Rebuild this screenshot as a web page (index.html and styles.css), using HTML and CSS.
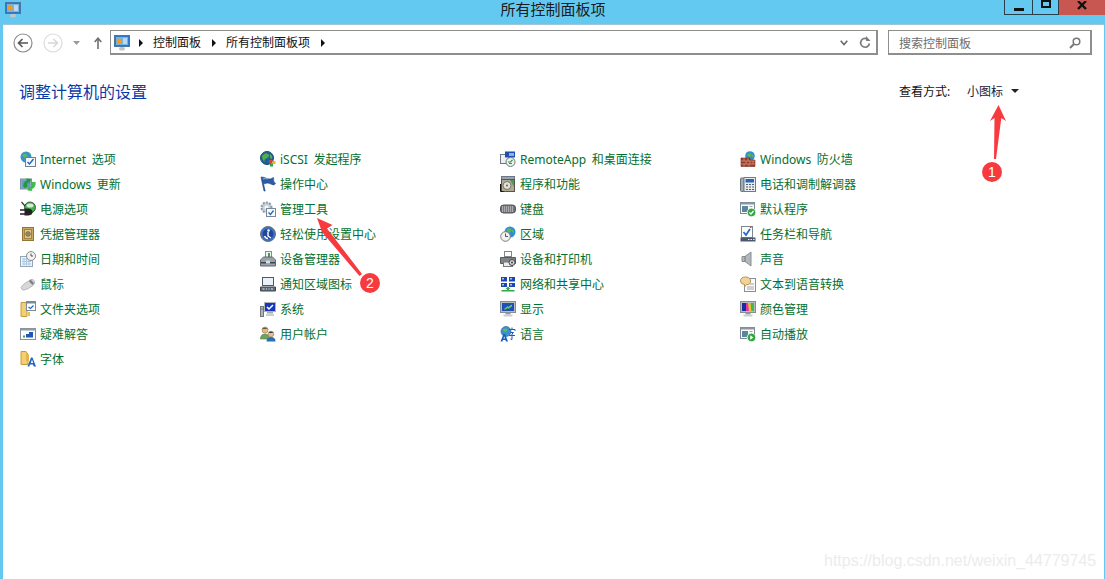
FILE: index.html
```html
<!DOCTYPE html>
<html lang="zh-CN">
<head>
<meta charset="utf-8">
<title>所有控制面板项</title>
<link rel="stylesheet" href="styles.css">
</head>
<body>
<div class="window">
  <header class="titlebar">
    <div class="title-left">
      <svg class="ico" viewBox="0 0 16 16"><rect x="0.5" y="0.5" width="15" height="11" fill="#2f78c4" stroke="#4a78a4"/><rect x="2" y="2" width="12" height="8" fill="#74b4e6"/><circle cx="5.200" cy="6" r="2.600" fill="#f29a1e"/><path d="M9 4h4M9 6h4M9 8h4" stroke="#fff"/><rect x="5" y="12" width="6" height="3.500" rx="1.700" fill="#c4c4c4"/></svg>
    </div>
    <div class="title-text">所有控制面板项</div>
    <div class="caption">
      <div class="cap cap-min"><span class="min-glyph"></span></div>
      <div class="cap cap-max"><span class="max-glyph"></span></div>
      <div class="cap cap-close"><svg width="10" height="9" viewBox="0 0 10 9"><path d="M1 0l8 8M9 0l-8 8" stroke="#111" stroke-width="2.400" fill="none"/></svg></div>
    </div>
  </header>

  <main class="client">
    <nav class="navbar">
      <div class="nav-buttons">
        <svg class="nav-round" viewBox="0 0 20 20"><circle cx="10" cy="10" r="9" fill="#fff" stroke="#8c8c8c" stroke-width="1.200"/><path d="M15 10H6M9.500 6L5.500 10l4 4" fill="none" stroke="#555" stroke-width="1.600"/></svg>
        <svg class="nav-round nav-fwd" viewBox="0 0 20 20"><circle cx="10" cy="10" r="9" fill="#fff" stroke="#dcdcdc" stroke-width="1.200"/><path d="M5 10h9M10.500 6l4 4-4 4" fill="none" stroke="#d8d8d8" stroke-width="1.600"/></svg>
        <svg class="nav-drop" width="7" height="4" viewBox="0 0 7 4"><path d="M0 0h7L3.500 4z" fill="#9a9a9a"/></svg>
        <svg class="nav-up" width="8" height="12" viewBox="0 0 8 12"><path d="M4 12V2M0.700 5L4 1.200 7.300 5" fill="none" stroke="#707070" stroke-width="1.600"/></svg>
      </div>
      <div class="address">
        <svg class="ico" viewBox="0 0 16 16"><rect x="0.5" y="0.5" width="15" height="11" fill="#2f78c4" stroke="#4a78a4"/><rect x="2" y="2" width="12" height="8" fill="#74b4e6"/><circle cx="5.200" cy="6" r="2.600" fill="#f29a1e"/><path d="M9 4h4M9 6h4M9 8h4" stroke="#fff"/><rect x="5" y="12" width="6" height="3.500" rx="1.700" fill="#c4c4c4"/></svg>
        <span class="crumb-sep first"></span>
        <span class="crumb">控制面板</span>
        <span class="crumb-sep"></span>
        <span class="crumb">所有控制面板项</span>
        <span class="crumb-sep"></span>
        <span class="address-fill"></span>
        <svg class="addr-chev" width="8" height="6" viewBox="0 0 8 6"><path d="M0.700 0.700L4 4.500 7.300 0.700" fill="none" stroke="#666" stroke-width="1.500"/></svg>
        <svg class="addr-refresh" width="12" height="13" viewBox="0 0 12 13"><path d="M9.600 4.200A4.400 4.400 0 1 0 10.400 7.500" fill="none" stroke="#7d7d7d" stroke-width="1.700"/><path d="M7 0v5h4.500z" fill="#7d7d7d"/></svg>
      </div>
      <div class="search">
        <span class="search-text">搜索控制面板</span>
        <svg width="12" height="12" viewBox="0 0 12 12"><circle cx="7.500" cy="4.500" r="3.300" fill="none" stroke="#777" stroke-width="1.500"/><path d="M5 7l-4 4" stroke="#777" stroke-width="2"/></svg>
      </div>
    </nav>

    <section class="heading-row">
      <h1 class="heading">调整计算机的设置</h1>
      <div class="view-by">
        <span class="view-label">查看方式:</span>
        <span class="view-value">小图标</span>
        <span class="view-caret"></span>
      </div>
    </section>

    <section class="items">
      <div class="col">
        <a class="item"><svg class="ico" viewBox="0 0 16 16"><circle cx="6" cy="6" r="5.500" fill="#3d8fd0"/><path d="M2 4q3-3 5 0t-2 4zM8 1q3 1 3 4" fill="#5cb85a"/><rect x="5.500" y="6.500" width="10" height="9" fill="#f4f7fb" stroke="#6f7f90"/><path d="M7.500 11l2 2 4-5" fill="none" stroke="#2568c0" stroke-width="1.500"/></svg><span>Internet 选项</span></a>
        <a class="item"><svg class="ico" viewBox="0 0 16 16"><rect x="0.500" y="3" width="11" height="10" fill="#8faac0" stroke="#7a8fa2"/><rect x="2" y="4.500" width="8" height="7" fill="#5f9ac8"/><path d="M4 12q-2-5 3-8l-1-1.500 5 .5-1.500 4.500L8.500 6Q6 8 7.500 11z" fill="#1f9a35"/><path d="M15.500 6q1 5-4 7.500l1 1.500-5-.5 1.500-4.500 1 1.500q2.500-2 2-5.500z" fill="#3fbb4a"/></svg><span>Windows 更新</span></a>
        <a class="item"><svg class="ico" viewBox="0 0 16 16"><circle cx="10" cy="6.500" r="5.500" fill="#45b04e" stroke="#2d3a2d" stroke-width=".8"/><ellipse cx="10" cy="4.500" rx="3.500" ry="2" fill="#cdf0cf"/><path d="M0 9h5M0 13h5" stroke="#222" stroke-width="1.500"/><path d="M4.500 7.500h4q4 .5 4 3.500t-4 3.500h-4z" fill="#232323"/><path d="M1.500 1l3.500 4" stroke="#333" stroke-width="1.200"/></svg><span>电源选项</span></a>
        <a class="item"><svg class="ico" viewBox="0 0 16 16"><rect x="2.500" y="1.500" width="11" height="13" fill="#c9a75c" stroke="#957438"/><rect x="4.500" y="3.500" width="7" height="9" fill="#ddc688" stroke="#a3843f"/><circle cx="8" cy="8" r="2.200" fill="#b9b09a" stroke="#6c5a30"/><circle cx="8" cy="8" r="0.800" fill="#5a4a20"/></svg><span>凭据管理器</span></a>
        <a class="item"><svg class="ico" viewBox="0 0 16 16"><rect x="0.500" y="5.500" width="12" height="10" fill="#eef4fb" stroke="#93a6b8"/><path d="M2 8h9M2 10.500h9M2 13h9M4 7v7.500M6.500 7v7.500M9 7v7.500" stroke="#a9c7e4"/><circle cx="11" cy="5" r="4.500" fill="#f2f2f2" stroke="#8a8a8a"/><path d="M11 2.500V5h2" fill="none" stroke="#555"/></svg><span>日期和时间</span></a>
        <a class="item"><svg class="ico" viewBox="0 0 16 16"><path d="M1 11.500Q3 8 7 6l4-2.500q3-.5 3.500 2t-1.500 4L9 12q-5 3-7 1.500z" fill="#d6d8da" stroke="#a6a9ad" stroke-width=".8"/><path d="M10.500 3.500l3.500 3.500-1.500 2-3.500-3.500z" fill="#7c8085"/></svg><span>鼠标</span></a>
        <a class="item"><svg class="ico" viewBox="0 0 16 16"><path d="M1 1.500h5l1 2v12H1z" fill="#f2cf72" stroke="#c49c3c"/><rect x="6.500" y="0.500" width="9" height="9" fill="#fdfdfd" stroke="#7d8a98"/><rect x="6.500" y="0.500" width="9" height="2" fill="#7d8a98"/><path d="M8.500 6l2 1.500 3-3" fill="none" stroke="#2568c0" stroke-width="1.300"/><rect x="8" y="11" width="2" height="4" fill="#e9bf56"/></svg><span>文件夹选项</span></a>
        <a class="item"><svg class="ico" viewBox="0 0 16 16"><rect x="0.500" y="2.500" width="15" height="11" fill="#fdfdfd" stroke="#84909c"/><rect x="0.500" y="2.500" width="15" height="2" fill="#8d99a5"/><path d="M6 11V8h3V6h4v5.500H6z" fill="#2056b8"/><rect x="3" y="9.500" width="2" height="2" fill="#45a04c"/></svg><span>疑难解答</span></a>
        <a class="item"><svg class="ico" viewBox="0 0 16 16"><path d="M1 0.500h5l2 3v10H1z" fill="#f2cf72" stroke="#c49c3c"/><path d="M6 2l3 2v6H6z" fill="#e2b44c"/><path d="M7.500 15.500L11 6.500h1.500l3.500 9h-2.300l-.7-2h-3l-.7 2zM10.800 12h2.400L12 8.500z" fill="#1f63c9"/></svg><span>字体</span></a>
      </div>
      <div class="col">
        <a class="item"><svg class="ico" viewBox="0 0 16 16"><circle cx="7" cy="7" r="6.500" fill="#215f9a" stroke="#194a78"/><path d="M2 5q3-4 6-2t-1 4-2 4q-3-2-3-6zM10 3q3 2 2 5l-2-1z" fill="#4fae4a"/><rect x="9" y="9" width="3.500" height="3.500" fill="#e23b30"/><rect x="12.500" y="10" width="3" height="3" fill="#f2b51f"/><rect x="10" y="12.500" width="3" height="3" fill="#2fa34a"/></svg><span>iSCSI 发起程序</span></a>
        <a class="item"><svg class="ico" viewBox="0 0 16 16"><path d="M1 1l3 14h1.200L3.500 8Q8 6 11 8t4.500-.500Q13 6 13.500 1.500 10 4 7 2.500T1 1z" fill="#2a5ca8" stroke="#1c3f78" stroke-width=".6"/><path d="M3 3q3-1 5 0" stroke="#8fb5e6" fill="none"/></svg><span>操作中心</span></a>
        <a class="item"><svg class="ico" viewBox="0 0 16 16"><circle cx="6.500" cy="6.500" r="5" fill="#c4d2dc" stroke="#8c9ba8" stroke-width="2" stroke-dasharray="2 1.200"/><circle cx="6.500" cy="6.500" r="2" fill="#f4f7f9"/><rect x="6.500" y="7.500" width="9" height="8" fill="#f7f9fb" stroke="#7a8894"/><path d="M8.500 11.500l2 2 3-4" fill="none" stroke="#2568c0" stroke-width="1.300"/></svg><span>管理工具</span></a>
        <a class="item"><svg class="ico" viewBox="0 0 16 16"><circle cx="8" cy="8" r="7.500" fill="#3d6fc4" stroke="#69737d"/><circle cx="8" cy="8" r="5.300" fill="#21479a"/><circle cx="8.500" cy="4.500" r="1.300" fill="#fff"/><path d="M8 6v4l3 2M4.500 10q1 2.500 3.500 2.500" fill="none" stroke="#fff" stroke-width="1.400"/></svg><span>轻松使用设置中心</span></a>
        <a class="item"><svg class="ico" viewBox="0 0 16 16"><rect x="5.500" y="0.500" width="6" height="7" fill="#eef0f2" stroke="#8c8c8c"/><rect x="8" y="2" width="2" height="4" fill="#3da548"/><path d="M0.500 9l3-3h9l3 3v6h-15z" fill="#9aa3ac" stroke="#5f6870"/><rect x="1" y="11" width="14" height="1.500" fill="#3f474f"/><rect x="6" y="9.500" width="4" height="3" fill="#d8dde2"/></svg><span>设备管理器</span></a>
        <a class="item"><svg class="ico" viewBox="0 0 16 16"><rect x="2.500" y="1.500" width="11" height="8" fill="#eaf1f8" stroke="#4b5a68"/><path d="M0.500 11h15v4h-15z" fill="#5e6a76" stroke="#3f4a54"/><path d="M2.500 13h2M6 13h1M8.500 13h1M11 13h2" stroke="#e4e8ec"/></svg><span>通知区域图标</span></a>
        <a class="item"><svg class="ico" viewBox="0 0 16 16"><rect x="4.500" y="1.500" width="11" height="9" fill="#1737b8" stroke="#aeb4ba"/><path d="M7 6l2 2 4-4" fill="none" stroke="#fff" stroke-width="1.500"/><rect x="7" y="11" width="6" height="1.500" fill="#a4a9ae"/><rect x="6" y="13" width="8" height="2" fill="#c9ced2"/><rect x="0.500" y="5.500" width="3" height="10" fill="#aeb4ba" stroke="#6f767c"/><rect x="1.500" y="7" width="1" height="2" fill="#3da548"/></svg><span>系统</span></a>
        <a class="item"><svg class="ico" viewBox="0 0 16 16"><circle cx="5" cy="4" r="3" fill="#e6b98a" stroke="#8f7350" stroke-width=".6"/><path d="M2.200 3q2-3 5.500 0z" fill="#6c5330"/><path d="M0.500 13q0-5 4.500-5t4 5z" fill="#6ea35e" stroke="#4f7f42" stroke-width=".6"/><circle cx="11" cy="8" r="2.800" fill="#e8c097" stroke="#8f7350" stroke-width=".6"/><path d="M8.500 7q2-3 5 0z" fill="#3d3d3d"/><path d="M6.500 15.500q0-4.500 4.500-4.500t4.500 4.500z" fill="#2f6fb0"/></svg><span>用户帐户</span></a>
      </div>
      <div class="col">
        <a class="item"><svg class="ico" viewBox="0 0 16 16"><rect x="0.500" y="3.500" width="8" height="9" fill="#eef1f4" stroke="#6c7884"/><rect x="5" y="0.500" width="10" height="6" fill="#1f50b0"/><rect x="9" y="2" width="5" height="3" fill="#8fb3e0"/><circle cx="10.500" cy="11" r="4.500" fill="#eef1ea" stroke="#6c7884"/><path d="M8 11h2.500l2-2M9 12.500h3" fill="none" stroke="#2f9a3f" stroke-width="1.200"/></svg><span>RemoteApp 和桌面连接</span></a>
        <a class="item"><svg class="ico" viewBox="0 0 16 16"><rect x="1.500" y="0.500" width="13" height="3" fill="#9aa4b8" stroke="#6d7688"/><rect x="1.500" y="3.500" width="13" height="12" fill="#b1aa90" stroke="#555"/><circle cx="7" cy="9.500" r="4" fill="#dfe0d8" stroke="#757567"/><circle cx="7" cy="9.500" r="1" fill="#66665a"/><path d="M10 4h4v7z" fill="#4d9a52"/><path d="M0.500 8v7.500h3" fill="none" stroke="#111"/></svg><span>程序和功能</span></a>
        <a class="item"><svg class="ico" viewBox="0 0 16 16"><path d="M0.500 7q0-3 3-3h9q3 0 3 3v2q0 3-3 3h-9q-3 0-3-3z" fill="#6e7074" stroke="#54565a"/><path d="M2 6h12M2 8h12M2 10h12" stroke="#e6e7e8" stroke-dasharray="1.200 .8"/></svg><span>键盘</span></a>
        <a class="item"><svg class="ico" viewBox="0 0 16 16"><circle cx="10" cy="6" r="5.500" fill="#2f8fd6"/><path d="M6 4q3-3 5-1t-2 4zM12 3q2 2 2 4l-2-1z" fill="#5cb850"/><circle cx="5.500" cy="10.500" r="4.800" fill="#f2f2f0" stroke="#7c7c7c"/><path d="M5.500 7.500v3h2.500" fill="none" stroke="#555"/></svg><span>区域</span></a>
        <a class="item"><svg class="ico" viewBox="0 0 16 16"><rect x="4.500" y="0.500" width="7" height="5" fill="#fdfdfd" stroke="#858585"/><path d="M0.500 6.500h15v6h-15z" fill="#7d848b" stroke="#565b60"/><rect x="3.500" y="11" width="9" height="4.500" fill="#ececec" stroke="#777"/><circle cx="12" cy="11.500" r="3" fill="#cfd3d6" stroke="#444"/><circle cx="12" cy="11.500" r="1" fill="#444"/></svg><span>设备和打印机</span></a>
        <a class="item"><svg class="ico" viewBox="0 0 16 16"><rect x="1" y="1" width="6" height="4.500" fill="#1c46b4"/><rect x="9" y="1" width="6" height="4.500" fill="#1c46b4"/><rect x="1" y="7" width="6" height="4" fill="#1c46b4"/><rect x="9" y="7" width="6" height="4" fill="#1c46b4"/><rect x="2" y="2" width="2" height="1.500" fill="#a9c6ee"/><rect x="10" y="2" width="2" height="1.500" fill="#a9c6ee"/><rect x="2" y="8" width="2" height="1.500" fill="#a9c6ee"/><rect x="10" y="8" width="2" height="1.500" fill="#a9c6ee"/><path d="M8 10.500l2.500 2.500H9v1h5.500v1.500h-13V14H7v-1H5.500z" fill="#37a848"/></svg><span>网络和共享中心</span></a>
        <a class="item"><svg class="ico" viewBox="0 0 16 16"><rect x="0.500" y="0.500" width="15" height="11" fill="#b7bcc0" stroke="#888d92"/><rect x="2" y="2" width="12" height="8" fill="#1f4fb8"/><path d="M12 3.500L8 6V5L4.500 7.500V9L8 7v1l4-2.500z" fill="#6ad04a"/><rect x="5.500" y="12" width="5" height="1.500" fill="#999"/><rect x="3.500" y="13.500" width="9" height="2" fill="#c9cdd0"/></svg><span>显示</span></a>
        <a class="item"><svg class="ico" viewBox="0 0 16 16"><circle cx="6" cy="5.500" r="5" fill="#3d8fd0" stroke="#2d6fa8" stroke-width=".7"/><path d="M2.500 4q2-2.500 4-1t-1 3zM8 2q2 1 2 3z" fill="#66bb58"/><path d="M0.500 15.500L3.500 8h1.500l3 7.500H6L5.400 14H3l-.6 1.500zM3.500 12.500h1.500L4.200 10z" fill="#1a5cc0"/><path d="M12 1.500v1.500M9 3.500h6v1.500M10.500 6.500h3l-1.500 1.500v5.500l-1.500-.5M9 9.500h6" fill="none" stroke="#1a5cc0" stroke-width="1"/></svg><span>语言</span></a>
      </div>
      <div class="col">
        <a class="item"><svg class="ico" viewBox="0 0 16 16"><circle cx="10" cy="5" r="4.800" fill="#2f8fd6"/><path d="M7 4q2-3 4-1t-2 3zM12 3l2 3-2 0z" fill="#5cb850"/><path d="M1 7h9v2h5v6.500H1z" fill="#9b3d28" stroke="#6c2a1a" stroke-width=".6"/><path d="M1 10h14M1 13h14M4 7v3M8 7v3M6 10v3M10 10v3M13 10v3M4 13v2.500M9 13v2.500" stroke="#d89f88" stroke-width=".7"/></svg><span>Windows 防火墙</span></a>
        <a class="item"><svg class="ico" viewBox="0 0 16 16"><rect x="0.500" y="2" width="3.500" height="13.500" rx="1" fill="#a4adb5" stroke="#69727a"/><rect x="4" y="1.500" width="11.500" height="14" fill="#e9edf1" stroke="#6f7a84"/><rect x="5.500" y="3" width="8.500" height="3.500" fill="#2a66b8"/><path d="M6 8.500h2M9 8.500h2M12 8.500h2M6 11h2M9 11h2M12 11h2M6 13.500h2M9 13.500h2M12 13.500h2" stroke="#536069" stroke-width="1.200"/></svg><span>电话和调制解调器</span></a>
        <a class="item"><svg class="ico" viewBox="0 0 16 16"><rect x="0.500" y="1.500" width="14" height="11" fill="#fdfdfd" stroke="#7b8793"/><rect x="0.500" y="1.500" width="14" height="2" fill="#8a96a2"/><rect x="2" y="5" width="6" height="6" fill="#5a86a0"/><path d="M9.500 5.500h3M9.500 7.500h3" stroke="#9aa5af"/><circle cx="11.500" cy="11.500" r="4.300" fill="#2ea73e" stroke="#e9f5ea"/><path d="M9.500 11.500l1.500 1.500 2.500-3" fill="none" stroke="#fff" stroke-width="1.300"/></svg><span>默认程序</span></a>
        <a class="item"><svg class="ico" viewBox="0 0 16 16"><rect x="1.500" y="0.500" width="11" height="11" fill="#fdfdfd" stroke="#7b8793"/><path d="M3.500 6l2.500 3 4-6" fill="none" stroke="#2568c0" stroke-width="1.700"/><rect x="10" y="0.500" width="1.500" height="1.500" fill="#d83c30"/><rect x="0.500" y="11.500" width="15" height="4" fill="#4a5a6c"/><path d="M8 13.500h1.500M10.500 13.500H12M13 13.500h1.500" stroke="#dfe5ea"/></svg><span>任务栏和导航</span></a>
        <a class="item"><svg class="ico" viewBox="0 0 16 16"><path d="M2 5.500h3L11 1v14L5 10.500H2z" fill="#b4b8bc" stroke="#8a8f94"/><path d="M5 5.500v5" stroke="#75797d"/></svg><span>声音</span></a>
        <a class="item"><svg class="ico" viewBox="0 0 16 16"><rect x="4.500" y="2.500" width="11" height="13" fill="#fbfbfb" stroke="#8a8f94"/><path d="M10 8h4M7 11h7M7 13h7" stroke="#a0a5aa"/><path d="M0.500 5q0-4 5-4t5 4-4 3.500L4.500 11V8.500Q.5 8 .5 5z" fill="#f1d39a" stroke="#b49355"/></svg><span>文本到语音转换</span></a>
        <a class="item"><svg class="ico" viewBox="0 0 16 16"><rect x="0.500" y="0.500" width="15" height="11" fill="#b7bcc0" stroke="#888d92"/><rect x="2" y="2" width="12" height="8" fill="#1b2a9c"/><path d="M6 2h3l1 8H6z" fill="#d93ab0"/><path d="M8 2h3l1 8H9z" fill="#f2c02a"/><path d="M10.500 2H14v8h-2.500z" fill="#44b84a"/><rect x="5.500" y="12" width="5" height="1.500" fill="#999"/><rect x="3.500" y="13.500" width="9" height="2" fill="#c9cdd0"/></svg><span>颜色管理</span></a>
        <a class="item"><svg class="ico" viewBox="0 0 16 16"><rect x="0.500" y="1.500" width="14" height="11" fill="#fdfdfd" stroke="#7b8793"/><rect x="0.500" y="1.500" width="14" height="2" fill="#8a96a2"/><rect x="2" y="5" width="6" height="6" fill="#5a86a0"/><path d="M9.500 5.500h3M9.500 7.500h3" stroke="#9aa5af"/><circle cx="11.500" cy="11.500" r="4.300" fill="#2ea73e" stroke="#e9f5ea"/><path d="M10.200 9.300l3.300 2.200-3.300 2.200z" fill="#fff"/></svg><span>自动播放</span></a>
      </div>
    </section>

    <div class="watermark">https://blog.csdn.net/weixin_44779745</div>
  </main>

  <svg class="annotation" viewBox="0 0 1105 579">
    <path d="M998.500 105L1006 121 1001.300 118 996 159 994 159 994.500 118 990 121z" fill="#f73a3e"/>
    <circle cx="992" cy="172" r="10" fill="#f73a3e"/>
    <path d="M317 218L332.500 225 327 228.500 362 274 359.500 276 322 232z" fill="#f73a3e"/>
    <circle cx="370" cy="283" r="10" fill="#f73a3e"/>
    <text class="badge-num" x="992" y="177">1</text>
    <text class="badge-num" x="370" y="288">2</text>
  </svg>
</div>
</body>
</html>
```

FILE: styles.css
```css
* { box-sizing: border-box; }
html, body { margin: 0; padding: 0; }
body {
  font-family: "Noto Sans", "Noto Sans CJK SC", sans-serif;
  font-size: 12px;
  overflow: hidden;
}
.window {
  position: relative;
  width: 1105px;
  height: 579px;
  background: #63c9f0;
  display: flex;
  flex-direction: column;
  padding: 0 1px 0 3px;
}
.ico { width: 16px; height: 16px; flex: none; display: block; }

/* title bar */
.titlebar {
  height: 24px;
  margin-left: -3px;
  margin-right: -1px;
  display: grid;
  grid-template-columns: 1fr auto 1fr;
  align-items: start;
  flex: none;
}
.title-left { padding: 2px 0 0 5px; }
.title-text {
  font-size: 15px;
  line-height: 18px;
  color: #1a1a1a;
  padding-left: 1px;
}
.caption { display: flex; justify-content: flex-end; height: 15px; }
.cap {
  height: 15px;
  border: 1px solid #2b3e4d;
  border-top: 0;
  display: flex;
  align-items: center;
  justify-content: center;
}
.cap-min { width: 28px; border-right: 0; align-items: flex-end; padding-bottom: 3px; }
.cap-max { width: 26px; border-right: 0; align-items: flex-start; }
.cap-close { width: 47px; background: #c75750; border-right: 0; border-bottom: 0; align-items: flex-start; padding: 1px 0 0; }
.min-glyph { width: 10px; height: 3px; background: #111; }
.max-glyph { width: 10px; height: 8px; border: 2px solid #111; }

/* client */
.client {
  position: relative;
  flex: 1;
  background: #fff;
  border-top: 1px solid #9fc4d8;
  min-height: 0;
}
.navbar {
  display: flex;
  align-items: stretch;
  height: 25px;
  margin-top: 5px;
  padding-right: 12px;
}
.nav-buttons {
  width: 107px;
  display: flex;
  align-items: center;
  padding-left: 10px;
}
.nav-round { width: 20px; height: 20px; flex: none; }
.nav-fwd { margin-left: 10px; }
.nav-drop { margin-left: 10px; }
.nav-up { margin-left: 14px; }
.address {
  width: 768px;
  display: flex;
  align-items: center;
  border: solid #8e8e8e;
  border-width: 1px 2px 2px 1px;
  padding: 1px 5px 0 3px;
  color: #111;
}
.crumb { line-height: 16px; }
.crumb-sep {
  width: 0;
  height: 0;
  margin: 0 10px 0 11px;
  border-left: 4px solid #111;
  border-top: 4px solid transparent;
  border-bottom: 4px solid transparent;
}
.crumb-sep.first { margin-left: 9px; }
.address-fill { flex: 1; }
.addr-chev { margin-right: 11px; }
.search {
  width: 204px;
  margin-left: 10px;
  display: flex;
  align-items: center;
  justify-content: space-between;
  border: solid #8e8e8e;
  border-width: 1px 2px 2px 1px;
  padding: 1px 9px 0 10px;
  color: #6d6d6d;
}

/* heading */
.heading-row {
  display: flex;
  justify-content: space-between;
  align-items: center;
  height: 24px;
  margin-top: 25px;
  padding: 0 85px 0 16px;
}
.heading {
  margin: 0;
  font-size: 16px;
  font-weight: 400;
  line-height: 24px;
  color: #0b3aa6;
}
.view-by { display: flex; align-items: center; color: #111; margin-top: -2px; }
.view-label { width: 68px; }
.view-value { width: 45px; color: #15203c; }
.view-caret {
  width: 0;
  height: 0;
  margin-left: -1px;
  border-top: 4px solid #222;
  border-left: 4px solid transparent;
  border-right: 4px solid transparent;
}

/* item grid */
.items {
  display: grid;
  grid-template-columns: repeat(4, 240px);
  margin-top: 42px;
  padding-left: 17px;
}
.col { display: flex; flex-direction: column; }
.item {
  height: 25px;
  display: flex;
  align-items: center;
  gap: 4px;
  color: #03702f;
  white-space: nowrap;
  word-spacing: 2.500px;
}

/* overlays */
.annotation {
  position: absolute;
  left: 0;
  top: 0;
  width: 1105px;
  height: 579px;
  pointer-events: none;
}
.badge-num {
  fill: #fff;
  font-family: "Liberation Sans", sans-serif;
  font-size: 14px;
  text-anchor: middle;
}
.watermark {
  position: absolute;
  left: 821px;
  top: 526px;
  font-family: "Liberation Sans", sans-serif;
  font-size: 16px;
  line-height: 20px;
  color: #ececec;
  white-space: nowrap;
}
```
